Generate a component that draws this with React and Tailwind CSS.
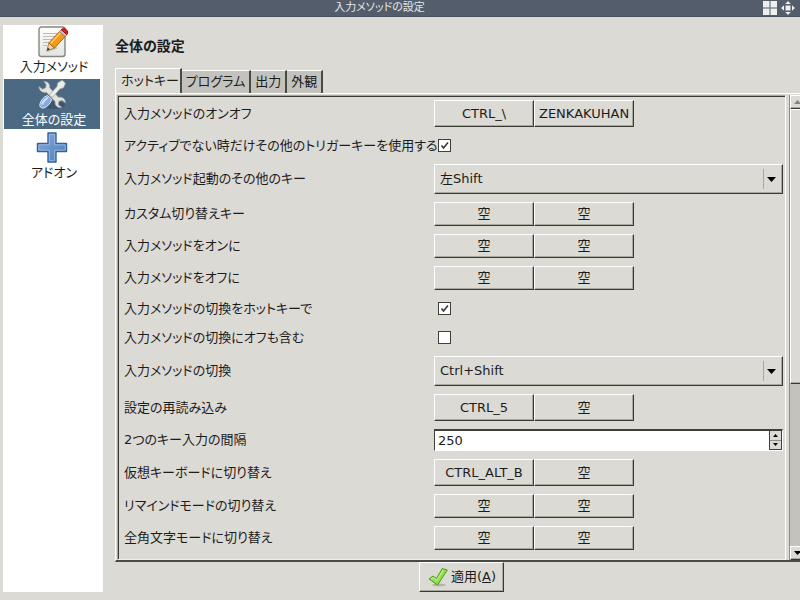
import { useState } from 'react'

const EMPTY = '空'

const SETTINGS = [
  { type: 'keys', label: '入力メソッドのオンオフ', keys: ['CTRL_\\', 'ZENKAKUHAN'] },
  { type: 'check', label: 'アクティブでない時だけその他のトリガーキーを使用する', checked: true },
  { type: 'select', label: '入力メソッド起動のその他のキー', options: ['左Shift', '右Shift'] },
  { type: 'keys', label: 'カスタム切り替えキー', keys: [EMPTY, EMPTY] },
  { type: 'keys', label: '入力メソッドをオンに', keys: [EMPTY, EMPTY] },
  { type: 'keys', label: '入力メソッドをオフに', keys: [EMPTY, EMPTY] },
  { type: 'check', label: '入力メソッドの切換をホットキーで', checked: true },
  { type: 'check', label: '入力メソッドの切換にオフも含む', checked: false },
  { type: 'select', label: '入力メソッドの切換', options: ['Ctrl+Shift', 'Alt+Shift'] },
  { type: 'keys', label: '設定の再読み込み', keys: ['CTRL_5', EMPTY] },
  { type: 'spin', label: '2つのキー入力の間隔', value: 250 },
  { type: 'keys', label: '仮想キーボードに切り替え', keys: ['CTRL_ALT_B', EMPTY] },
  { type: 'keys', label: 'リマインドモードの切り替え', keys: [EMPTY, EMPTY] },
  { type: 'keys', label: '全角文字モードに切り替え', keys: [EMPTY, EMPTY] },
]

const RAISED = 'border border-t-white border-l-white border-b-[#3a3a35] border-r-[#3a3a35] bg-[#dcdad5] shadow-[inset_-1px_-1px_0_#a9a79e]'

function EditIcon() {
  return (
    <svg width="32" height="32" viewBox="0 0 32 32" aria-hidden="true">
      <defs>
        <linearGradient id="paper" x1="0" y1="0" x2="0" y2="1">
          <stop offset="0" stopColor="#fdfdfd" />
          <stop offset="1" stopColor="#e4e4e2" />
        </linearGradient>
      </defs>
      <rect x="3" y="1" width="26" height="29.500" rx="2.500" fill="url(#paper)" stroke="#85877f" strokeWidth="1.400" />
      <path d="M7 7.500h14M7 10.500h12M7 13.500h10M7 16.500h7M7 19.500h4" stroke="#bcbcba" strokeWidth="1.200" />
      <path d="M11 25l9-3" stroke="#c9c9c5" strokeWidth="2.500" strokeLinecap="round" />
      <path d="M11 24.500l1.800-7.500 5.700 5z" fill="#edd9a8" stroke="#97742b" strokeWidth=".8" />
      <path d="M11 24.500l.8-3 2.200 2z" fill="#333" />
      <path d="M12.800 17L23.500 5.500l5.700 5L18.500 22z" fill="#f39a1d" stroke="#a85b05" strokeWidth=".9" />
      <path d="M14.500 17.500L24.800 6.500" stroke="#fcc766" strokeWidth="1.800" />
      <path d="M23.500 5.500l1.700-1.900 5.700 5-1.700 1.900z" fill="#c8c9c5" stroke="#777" strokeWidth=".7" />
      <path d="M25.200 3.600c1.500-1.400 3.600-1.200 5 0s1.900 3.400.7 5z" fill="#df2222" stroke="#a40000" strokeWidth="1" />
    </svg>
  )
}

function ToolsIcon() {
  return (
    <svg width="32" height="32" viewBox="0 0 32 32" aria-hidden="true">
      <ellipse cx="18" cy="26" rx="11" ry="4" fill="#2c4257" opacity=".5" />
      <path
        d="M8 2.500c3.500-.4 6.300 2.600 5.600 6.200l9 9.700c3.500-1 7 1.500 6.900 5.400l-3.600-2.600-3.200 1.300-.3 3.400 3.500 2.400c-3.900 1.300-7.500-1.800-6.800-5.700l-8.700-9.300C6.600 14.300 2.800 11.500 3 7.600l3.500 2.700 3.300-1.500.3-3.400z"
        fill="#e4e4df" stroke="#a5a69f" strokeWidth=".8" strokeLinejoin="round"
      />
      <path d="M13.500 16l7.500-8.500.8-3.800 4.500-2.500 3.200 3-2 4.500-3.700 1.300-7.500 8.500z" fill="#ededea" stroke="#a5a69f" strokeWidth=".8" strokeLinejoin="round" />
      <path d="M11.500 16.500l4.200 3.800c-1 4-4.500 7.800-8.200 8.700-2.500.4-4-1.300-3.700-3.600.8-4 3.700-7.600 7.700-8.900z" fill="#82abe0" stroke="#dfe8f4" strokeWidth="1" />
      <path d="M6 25.500c1-2.700 3.200-5.300 6-6.800" fill="none" stroke="#cfe0f5" strokeWidth="2" />
    </svg>
  )
}

function PlusIcon() {
  return (
    <svg width="32" height="32" viewBox="0 0 32 32" aria-hidden="true">
      <defs>
        <linearGradient id="plus" x1="0" y1="0" x2="1" y2="1">
          <stop offset="0" stopColor="#83a9d9" />
          <stop offset="1" stopColor="#4f7ebb" />
        </linearGradient>
      </defs>
      <path d="M12 1h8v10.500h10.500v8H20V30h-8V19.500H1.500v-8H12z" fill="url(#plus)" stroke="#335f9c" strokeWidth="1.400" strokeLinejoin="round" />
      <path d="M13.300 2.300h5.400v10.500h10.500v5.400H18.700v10.500h-5.400V18.200H2.800v-5.400h10.500z" fill="none" stroke="#9fbfe6" strokeWidth=".8" />
    </svg>
  )
}

function ApplyIcon() {
  return (
    <svg width="20" height="20" viewBox="0 0 20 20" aria-hidden="true">
      <ellipse cx="11" cy="18" rx="7" ry="1.500" fill="#b5b3ad" />
      <path d="M1 12l4-3 3.300 2.500L14.300 1.500l5 1.500L9.500 18z" fill="#8ee04a" stroke="#4f9a1c" strokeWidth="1" strokeLinejoin="round" />
      <path d="M3 12l2-1.500 3.800 3L15.200 3" fill="none" stroke="#c8f59b" strokeWidth="1" />
    </svg>
  )
}

function Arrow({ up = false }) {
  return (
    <svg width="7" height="4" viewBox="0 0 7 4" aria-hidden="true">
      <path d={up ? 'M0 4L3.500 0 7 4z' : 'M0 0h7L3.500 4z'} fill="currentColor" />
    </svg>
  )
}

function TitleBar() {
  return (
    <header className="flex h-[17px] items-center border-b border-[#47505d] bg-[#535d6c] text-[#e6e6e6]">
      <h1 className="flex-1 pr-1 pl-0 text-center text-[11px] leading-4">入力メソッドの設定</h1>
      <div className="flex w-[37px] items-center gap-1">
        <button aria-label="タイル">
          <svg width="14" height="14" viewBox="0 0 14 14" fill="#eee" className="block">
            <path d="M0 0h6.500v6.500H0zM7.500 0H14v6.500H7.500zM0 7.500h6.500V14H0zM7.500 7.500H14V14H7.500z" />
          </svg>
        </button>
        <button aria-label="移動">
          <svg width="14" height="14" viewBox="0 0 14 14" fill="#eee" className="block">
            <rect x="4.500" y="4.500" width="5" height="5" />
            <path d="M7 0l2.800 3H4.200zM7 14l2.800-3H4.200zM0 7l3-2.800v5.600zM14 7l-3-2.800v5.600z" />
          </svg>
        </button>
      </div>
    </header>
  )
}

const PAGES = [
  { label: '入力メソッド', Icon: EditIcon },
  { label: '全体の設定', Icon: ToolsIcon },
  { label: 'アドオン', Icon: PlusIcon },
]

function Sidebar({ page, onSelect }) {
  return (
    <nav className="flex w-[100px] shrink-0 flex-col gap-[3px] bg-white px-px pt-px">
      {PAGES.map(({ label, Icon }, i) => (
        <button
          key={label}
          onClick={() => onSelect(i)}
          className={`flex h-[50px] w-24 flex-col items-center ${i === page ? 'bg-[#4b6983] text-white' : ''}`}
        >
          <span className="block h-8"><Icon /></span>
          <span className="pl-1 leading-[18px]">{label}</span>
        </button>
      ))}
    </nav>
  )
}

function Tabs() {
  const [active, setActive] = useState(0)
  return (
    <div role="tablist" className="flex h-[25px] items-end">
      {['ホットキー', 'プログラム', '出力', '外観'].map((tab, i) => (
        <button
          key={tab}
          role="tab"
          aria-selected={i === active}
          onClick={() => setActive(i)}
          className={`border-t border-r-2 border-t-white border-r-[#4a4a44] leading-[22px] ${
            i === active ? 'h-[25px] border-l border-l-white pr-px pl-[5px]' : 'h-[23px] bg-[#c4c2bd] px-1'
          }`}
        >
          {tab}
        </button>
      ))}
    </div>
  )
}

function KeyPair({ id, keys }) {
  const height = keys.every(k => k === EMPTY) ? 'h-6' : 'h-[27px]'
  return (
    <div className="flex">
      {keys.map((key, i) => (
        <button key={i} id={i === 0 ? id : undefined} className={`flex w-[100px] items-center px-1 ${height} ${RAISED}`}>
          <span className="mx-auto min-w-0 overflow-hidden leading-5">{key}</span>
        </button>
      ))}
    </div>
  )
}

function Check({ id, checked }) {
  const [on, setOn] = useState(checked)
  return (
    <div className="grid h-[21px] items-center pl-1">
      <input
        id={id}
        type="checkbox"
        checked={on}
        onChange={e => setOn(e.target.checked)}
        className="peer col-start-1 row-start-1 size-[13px] appearance-none border border-[#3f3f3b] bg-white"
      />
      <svg
        width="13" height="13" viewBox="0 0 13 13" fill="none" stroke="#333" strokeWidth="1.5"
        className="pointer-events-none invisible col-start-1 row-start-1 peer-checked:visible"
      >
        <path d="M3.500 6.500l2 2.500L10 3.500" />
      </svg>
    </div>
  )
}

function Select({ id, options }) {
  return (
    <div className={`grid h-[30px] items-center ${RAISED}`}>
      <select id={id} className="col-start-1 row-start-1 h-7 w-full appearance-none bg-transparent pl-[5px]">
        {options.map(o => <option key={o}>{o}</option>)}
      </select>
      <span className="pointer-events-none col-start-1 row-start-1 mr-[3px] flex h-5 w-4 items-center justify-center justify-self-end border-l border-[#a9a79e] text-black">
        <svg width="9" height="5" viewBox="0 0 9 5"><path d="M0 0h9L4.500 5z" fill="currentColor" /></svg>
      </span>
    </div>
  )
}

function Spin({ id, value }) {
  const [n, setN] = useState(value)
  return (
    <div className="flex h-[22px] border border-t-2 border-[#3f3f3b] border-r-white border-b-white bg-white">
      <input id={id} value={n} onChange={e => setN(Number(e.target.value) || 0)} className="min-w-0 flex-1 pl-[3px] outline-none" />
      <div className="flex w-[13px] flex-col border-x border-[#3f3f3b] bg-[#dcdad5] text-black">
        <button aria-label="増やす" onClick={() => setN(n + 1)} className="flex flex-1 items-center justify-center border-b border-[#8f8d86]">
          <svg width="5" height="3" viewBox="0 0 5 3"><path d="M0 3h5L2.500 0z" /></svg>
        </button>
        <button aria-label="減らす" onClick={() => setN(n - 1)} className="flex flex-1 items-center justify-center border-b border-[#3f3f3b]">
          <svg width="5" height="3" viewBox="0 0 5 3"><path d="M0 0h5L2.500 3z" /></svg>
        </button>
      </div>
    </div>
  )
}

const CONTROLS = { keys: KeyPair, check: Check, select: Select, spin: Spin }

function SettingRow({ index, setting }) {
  const { type, label, ...rest } = setting
  const Control = CONTROLS[type]
  const id = `setting-${index}`
  return (
    <div className="grid grid-cols-[310px_1fr] items-center">
      <label htmlFor={id} className="leading-5 whitespace-nowrap">{label}</label>
      <Control id={id} {...rest} />
    </div>
  )
}

function ScrollBar() {
  return (
    <div className="w-[11px] shrink-0 overflow-hidden border-l border-[#8f8d86] bg-[#c4c2bd]">
      <div className="flex h-full w-[15px] flex-col">
        <button aria-label="上へ" className={`flex h-[14px] items-center justify-center text-[#85837c] ${RAISED}`}>
          <Arrow up />
        </button>
        <div className="flex flex-1 flex-col">
          <div className={`h-[63%] ${RAISED}`} />
        </div>
        <button aria-label="下へ" className={`flex h-[14px] items-center justify-center text-black ${RAISED}`}>
          <Arrow />
        </button>
      </div>
    </div>
  )
}

export default function App() {
  const [page, setPage] = useState(1)

  return (
    <div className="flex min-h-screen flex-col overflow-hidden bg-[#dcdad5] font-['DejaVu_Sans','Noto_Sans_CJK_JP',sans-serif] text-[13px] text-[#1c1c1c] [font-feature-settings:'palt']">
      <TitleBar />
      <div className="flex flex-1 gap-3 pt-2 pb-2 pl-[3px]">
        <Sidebar page={page} onSelect={setPage} />

        <main className="flex min-w-0 flex-1 flex-col">
          <h2 className="pt-[11px] pb-3 text-sm leading-5 font-bold">全体の設定</h2>
          <Tabs />

          <div className="flex border-t border-b-2 border-l border-t-white border-b-[#4a4a44] border-l-white pt-px pl-px">
            <div className="mr-[3px] flex min-w-0 flex-1 flex-col gap-2 border border-t-[#a9a79e] border-r-white border-b-[#f0efec] border-l-[#a9a79e] pt-1 pr-0.5 pb-[9px] pl-1.5 shadow-[inset_1px_1px_0_#3a3a35]">
              {SETTINGS.map((s, i) => <SettingRow key={s.label} index={i} setting={s} />)}
            </div>
            <ScrollBar />
          </div>

          <div className="flex justify-center pl-2">
            <button className={`flex h-[30px] w-[85px] items-center gap-[3px] pl-2 ${RAISED}`}>
              <ApplyIcon />
              <span className="leading-5 whitespace-nowrap">適用(<u>A</u>)</span>
            </button>
          </div>
        </main>
      </div>
    </div>
  )
}
